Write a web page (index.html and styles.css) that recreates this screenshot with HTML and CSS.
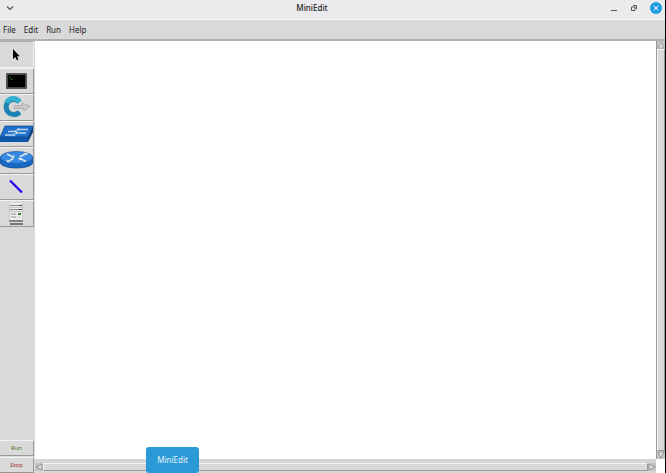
FILE: index.html
```html
<!DOCTYPE html>
<html lang="en">

<head>
    <meta charset="utf-8">
    <title>MiniEdit</title>
    <link rel="stylesheet" href="styles.css">
</head>

<body>
    <div class="window">
        <header class="titlebar">
            <button class="win-btn" aria-label="Window menu">
                <svg width="8" height="6" viewBox="0 0 8 6"><path d="M1 1.5 L4 4.5 L7 1.5" fill="none" stroke="#555" stroke-width="1.2"/></svg>
            </button>
            <h1>MiniEdit</h1>
            <div class="win-controls">
                <button class="win-btn" aria-label="Minimize">
                    <svg width="8" height="8" viewBox="0 0 8 8"><path d="M1 6.5 H7" stroke="#555" stroke-width="1"/></svg>
                </button>
                <button class="win-btn" aria-label="Restore">
                    <svg width="8" height="8" viewBox="0 0 8 8" fill="none" stroke="#555"><path d="M1.5 3 H5 V6.5 H1.5 Z"/><path d="M3 1.5 H6.5 V5"/></svg>
                </button>
                <button class="win-btn close" aria-label="Close">
                    <svg width="12" height="12" viewBox="0 0 12 12"><circle cx="6" cy="6" r="6" fill="#1d9be0"/><path d="M3.7 3.7 L8.3 8.3 M8.3 3.7 L3.7 8.3" stroke="#fff" stroke-width="1"/></svg>
                </button>
            </div>
        </header>

        <nav class="menubar">
            <button>File</button>
            <button>Edit</button>
            <button>Run</button>
            <button>Help</button>
        </nav>

        <div class="workspace">
            <aside class="sidebar">
                <div class="tools">
                    <button class="tool active" aria-label="Select">
                        <svg width="34" height="25" viewBox="0 0 34 25"><path d="M13 7 V17 L15.3 15 L16.8 18.3 L18.4 17.5 L17 14.3 H19.7 Z" fill="#000"/></svg>
                    </button>
                    <button class="tool" aria-label="Host">
                        <svg width="34" height="25" viewBox="0 0 34 25">
                            <rect x="6" y="4" width="21" height="16" rx="1.5" fill="#2a2626"/>
                            <rect x="7" y="5" width="19" height="14" rx="1" fill="#000" stroke="#8b8484" stroke-width="1"/>
                            <path d="M9 7.5 L10.5 8.7 L9 10 M11 10.5 H13" fill="none" stroke="#187a22" stroke-width=".8"/>
                        </svg>
                    </button>
                    <button class="tool" aria-label="Switch">
                        <svg width="34" height="25" viewBox="0 0 34 25">
                            <path d="M19.5 17 A7.6 7.6 0 1 1 19.5 7" fill="none" stroke="#1c83b5" stroke-width="5"/>
                            <path d="M6.5 7.5 A7.6 7.6 0 0 1 19.5 7" fill="none" stroke="#35aed2" stroke-width="5"/>
                            <path d="M14 11 L22.5 10.5 L22 8 L30 11 L24 16 L23.5 13.5 L14 13.5 Z" fill="#c9c9c9" stroke="#a2a2a2" stroke-width=".7"/>
                        </svg>
                    </button>
                    <button class="tool" aria-label="Legacy switch">
                        <svg width="34" height="25" viewBox="0 0 34 25">
                            <path d="M0 15 L28 15 V20 H0 Z" fill="#0f56a8"/>
                            <path d="M28 15 L33 4 V10 L28 20 Z" fill="#0a3f80"/>
                            <path d="M5 4 H33 L28 15 H0 Z" fill="#1f70cc" stroke="#0c458a" stroke-width=".7"/>
                            <path d="M18 7.5 H28 M8 9.5 H17 M16 11 H26 M5 13 H14" stroke="#bfd6ea" stroke-width="1.3"/>
                            <path d="M19 6 L16 7.5 L19 9 Z M15 8 L18 9.5 L15 11 Z M17 9.5 L14 11 L17 12.5 Z M13 11.5 L16 13 L13 14.5 Z" fill="#bfd6ea"/>
                        </svg>
                    </button>
                    <button class="tool" aria-label="Legacy router">
                        <svg width="34" height="25" viewBox="0 0 34 25">
                            <path d="M0 9.5 V14 C0 22 33 22 33 14 V9.5 Z" fill="#1769c8" stroke="#174675" stroke-width=".7"/>
                            <ellipse cx="16.5" cy="9.5" rx="16.3" ry="6" fill="#3589e2" stroke="#1b5a9c" stroke-width=".7"/>
                            <path d="M7 6 L13 9 M26 5.5 L19.5 9 M13.5 10.5 L8 13.5 M26 13.5 L20 10.5" stroke="#d5e2e8" stroke-width="1.5"/>
                            <path d="M15 9.5 L10.5 9.5 L13.5 7 Z M27.5 4.7 V7.3 L23 5 Z M6.5 14.2 V11.8 L11 14.2 Z M18 10 L22.5 10 L19.5 12.5 Z" fill="#d5e2e8"/>
                        </svg>
                    </button>
                    <button class="tool" aria-label="Link">
                        <svg width="34" height="25" viewBox="0 0 34 25"><path d="M10 5.5 L22 17.5" stroke="#2a00f5" stroke-width="2.2"/></svg>
                    </button>
                    <button class="tool" aria-label="Controller">
                        <svg width="34" height="25" viewBox="0 0 34 25">
                            <rect x="9" y="2" width="14" height="18" fill="#ececec"/>
                            <path d="M9.5 2 V20 M22.5 2 V20 M9 6.5 H23 M9 10.5 H23" stroke="#b9b9b9" stroke-width=".7"/>
                            <path d="M10 4.5 H19 M10 8.5 H19" stroke="#888" stroke-width="1"/>
                            <path d="M19 4.5 H22 M19 8.5 H22" stroke="#444" stroke-width="1"/>
                            <path d="M11 13 H16 M11 16 H16" stroke="#c2c2c2" stroke-width="1.8"/>
                            <rect x="18" y="12" width="3" height="2" fill="#3f7a35"/>
                            <path d="M17 16 H21" stroke="#ccc" stroke-width="1"/>
                            <path d="M9 20 H23" stroke="#858585" stroke-width="2"/>
                            <path d="M10 23 H23" stroke="#777" stroke-width="2"/>
                        </svg>
                    </button>
                </div>
                <div class="actions">
                    <button class="run">Run</button>
                    <button class="stop">Stop</button>
                </div>
            </aside>

            <main class="canvas"></main>

            <div class="scroll vertical">
                <svg width="8" height="8" viewBox="0 0 8 8"><path d="M4 1 L7 7 H1 Z" fill="#ddd" stroke="#999" stroke-width=".8"/></svg>
                <div class="thumb"></div>
                <svg width="8" height="8" viewBox="0 0 8 8"><path d="M1 1 H7 L4 7 Z" fill="#ddd" stroke="#888" stroke-width=".8"/></svg>
            </div>

            <div class="scroll horizontal">
                <svg width="8" height="8" viewBox="0 0 8 8"><path d="M7 1 V7 L1 4 Z" fill="#ddd" stroke="#888" stroke-width=".8"/></svg>
                <div class="thumb"></div>
                <svg width="8" height="8" viewBox="0 0 8 8"><path d="M1 1 L7 4 L1 7 Z" fill="#ddd" stroke="#888" stroke-width=".8"/></svg>
            </div>
        </div>

        <div class="tooltip">MiniEdit</div>
    </div>
</body>

</html>
```
FILE: styles.css
```css
* {
    box-sizing: border-box;
}

body {
    margin: 0;
    font-family: "Noto Sans", "Open Sans", sans-serif;
    font-size: 8px;
    color: #222;
}

button {
    margin: 0;
    padding: 0;
    border: none;
    background: none;
    font: inherit;
    color: inherit;
}

svg {
    display: block;
}

.window {
    position: relative;
    display: flex;
    flex-direction: column;
    height: 100vh;
    background: #d9d9d9;
    border-right: 1px solid #000;
}

.titlebar {
    display: grid;
    grid-template-columns: 1fr auto 1fr;
    align-items: center;
    height: 20px;
    padding: 0 3px 4px 6px;
    background: #ebebed;
    border-bottom: 1px solid #f6f6f6;
}

.titlebar h1 {
    grid-column: 2;
    grid-row: 1;
    margin: 0;
    padding-right: 44px;
    font-size: 8px;
    font-weight: 500;
    line-height: 12px;
}

.win-controls {
    display: flex;
    grid-column: 3;
    grid-row: 1;
    justify-content: flex-end;
    align-items: center;
    gap: 12px;
}

.menubar {
    display: flex;
    align-items: center;
    gap: 8px;
    height: 21px;
    padding: 0 3px;
    border-bottom: 2px solid #b0b0b0;
}

.workspace {
    display: grid;
    flex: 1;
    grid-template-columns: 35px 1fr 9px;
    grid-template-rows: 1fr 14px;
    min-height: 0;
    background: #fff;
}

.sidebar {
    display: flex;
    flex-direction: column;
    grid-row: 1 / 3;
    justify-content: space-between;
    padding-right: 1px;
    background: #d9d9d9;
}

.tools {
    display: grid;
    grid-template-rows: repeat(7, 1fr);
    height: 186px;
}

.tool,
.actions button {
    overflow: hidden;
    border-top: 1px solid #f4f4f4;
    border-right: 1px solid #999;
    border-bottom: 1px solid #999;
}

.tool.active {
    border-color: #b0b0b0 #ececec #ececec;
}

.actions {
    display: flex;
    flex-direction: column;
    gap: 1px;
    font-size: 6px;
}

.actions button {
    height: 16px;
}

.run {
    color: #3f7426;
}

.stop {
    color: #a02d30;
}

.canvas {
    background: #fff;
}

.scroll {
    display: flex;
    background: #c3c3c3;
}

.thumb {
    flex: 1;
    background: #d9d9d9;
    border: 1px solid #999;
    border-top-color: #f4f4f4;
    border-left-color: #f4f4f4;
}

.vertical {
    flex-direction: column;
    border-left: 1px solid #999;
}

.horizontal {
    grid-column: 2;
    border-top: 4px solid #d5d5d5;
    border-bottom: 2px solid #d9d9d9;
}

.tooltip {
    position: absolute;
    bottom: 0;
    left: 22%;
    padding: 7px 11px;
    border-radius: 3px;
    background: #2a9ad6;
    color: #e4f3fb;
    line-height: 12px;
}
```
